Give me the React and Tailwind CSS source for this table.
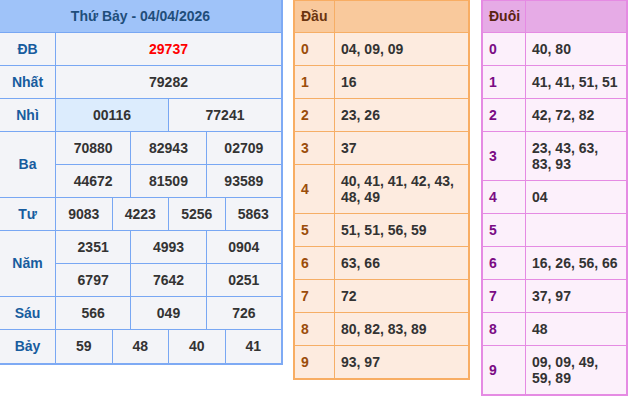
import * as React from "react";

const prizes = [
  { label: "ĐB", rows: [["29737"]], red: true },
  { label: "Nhất", rows: [["79282"]] },
  { label: "Nhì", rows: [["00116", "77241"]], highlight: true },
  { label: "Ba", rows: [["70880", "82943", "02709"], ["44672", "81509", "93589"]] },
  { label: "Tư", rows: [["9083", "4223", "5256", "5863"]] },
  { label: "Năm", rows: [["2351", "4993", "0904"], ["6797", "7642", "0251"]] },
  { label: "Sáu", rows: [["566", "049", "726"]] },
  { label: "Bảy", rows: [["59", "48", "40", "41"]] },
];

const dau = [
  "04, 09, 09",
  "16",
  "23, 26",
  "37",
  "40, 41, 41, 42, 43, 48, 49",
  "51, 51, 56, 59",
  "63, 66",
  "72",
  "80, 82, 83, 89",
  "93, 97",
];

const duoi = [
  "40, 80",
  "41, 41, 51, 51",
  "42, 72, 82",
  "23, 43, 63, 83, 93",
  "04",
  "",
  "16, 26, 56, 66",
  "37, 97",
  "48",
  "09, 09, 49, 59, 89",
];

function ResultTable() {
  return (
    <div className="w-[283px] shrink-0 border-r-2 border-b-2 border-[#7eaaf4]">
      <div className="h-[33px] flex items-center justify-center bg-[#9fc3f9] border-b border-[#78a7f3] text-[#1f4e7b]">
        Thứ Bảy - 04/04/2026
      </div>
      {prizes.map((p, i) => {
        const last = i === prizes.length - 1;
        return (
          <div
            key={p.label}
            className={"flex " + (last ? "" : "border-b border-[#78a7f3]")}
          >
            <div className="w-[56px] shrink-0 flex items-center justify-center border-r border-[#78a7f3] bg-[#f3f4f8] text-[#175c9e]">
              {p.label}
            </div>
            <div className="flex-1 flex flex-col">
              {p.rows.map((r, j) => (
                <div
                  key={j}
                  className={
                    "flex " + (j < p.rows.length - 1 ? "border-b border-[#78a7f3]" : "")
                  }
                >
                  {r.map((n, k) => (
                    <div
                      key={k}
                      className={
                        "flex-1 flex items-center justify-center " +
                        (last ? "h-[33px] " : "h-[32px] ") +
                        (k < r.length - 1 ? "border-r border-[#78a7f3] " : "") +
                        (p.highlight && k === 0 ? "bg-[#dcecfd] " : "bg-[#f3f4f8] ") +
                        (p.red ? "text-[#ff0000]" : "text-[#333333]")
                      }
                    >
                      {n}
                    </div>
                  ))}
                </div>
              ))}
            </div>
          </div>
        );
      })}
    </div>
  );
}

function LotoTable({ title, data, c }) {
  return (
    <div className={"shrink-0 border-x-2 border-t border-b-2 " + c.wrap}>
      <div className={"flex h-[32px] border-b " + c.line + " " + c.head}>
        <div className={"shrink-0 flex items-center pl-[6px] border-r " + c.col1 + " " + c.line + " " + c.headText}>
          {title}
        </div>
        <div className="flex-1" />
      </div>
      {data.map((v, i) => (
        <div
          key={i}
          className={
            "flex " + c.row + " " + (i < data.length - 1 ? "border-b " + c.line : "")
          }
        >
          <div className={"shrink-0 flex items-center pl-[6px] border-r " + c.col1 + " " + c.line + " " + c.digit}>
            {i}
          </div>
          <div className="flex-1 py-2 pl-[6px] pr-[5px] leading-4 min-h-[32px] text-[#333333]">
            {v}
          </div>
        </div>
      ))}
    </div>
  );
}

export default function App() {
  return (
    <div
      className="flex items-start w-[628px] h-[401px] bg-white text-[14px] font-bold overflow-hidden"
      style={{ fontFamily: '"Liberation Sans", Arial, sans-serif' }}
    >
      <ResultTable />
      <div className="ml-[10px]">
        <LotoTable
          title="Đầu"
          data={dau}
          c={{
            wrap: "w-[177px] border-[#f8ad63]",
            line: "border-[#f6ae66]",
            head: "bg-[#f9c99c]",
            headText: "text-[#6b3510]",
            col1: "w-[40px]",
            row: "bg-[#fdebdf]",
            digit: "text-[#9b4d0b]",
          }}
        />
      </div>
      <div className="ml-[11px]">
        <LotoTable
          title="Đuôi"
          data={duoi}
          c={{
            wrap: "w-[147px] border-[#e58be3]",
            line: "border-[#e58be3]",
            head: "bg-[#e6abe6]",
            headText: "text-[#5a2412]",
            col1: "w-[43px]",
            row: "bg-[#fcf0fb]",
            digit: "text-[#7a0b84]",
          }}
        />
      </div>
    </div>
  );
}
